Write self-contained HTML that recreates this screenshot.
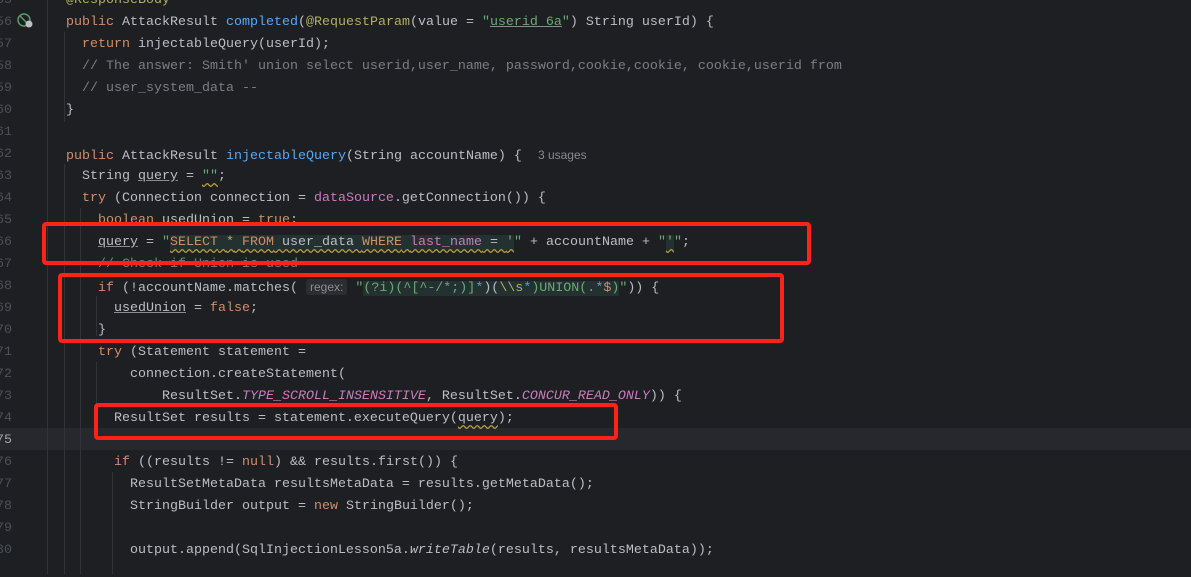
<!DOCTYPE html>
<html><head><meta charset="utf-8"><style>
body{margin:0;width:1191px;height:574px;background:#1e1f22;overflow:hidden;position:relative;font-family:"Liberation Mono",monospace;font-size:13.33px;color:#bcbec4}
#t{position:absolute;left:0;top:3px;width:1191px;height:574px}
.l{position:absolute;left:0;height:22px;line-height:22px;white-space:pre;width:1191px}
.n{position:absolute;left:-8px;width:20px;text-align:right;color:#4b5059}
.c{position:absolute;left:66px}
.k{color:#cf8e6d}.f{color:#56a8f5}.s{color:#6aab73}.cm{color:#7a7e85}.a{color:#b3ae60}.p{color:#c77dbb}.i{font-style:italic}
.u{text-decoration:underline;text-decoration-color:#8c8c8c}
.sq{background:#233130}
.w{text-decoration:underline wavy #b3a03a;text-underline-offset:3px}
.hint{background:#2b2d30;color:#8a8d94;border-radius:3px;font-family:"Liberation Sans",sans-serif;font-size:12px;padding:1px 4px}
.box{position:absolute;border:4px solid #ff2216;border-radius:4px}
.g{position:absolute;top:0;bottom:0;width:1px;background:#313338}
</style></head><body>
<div style="position:absolute;left:0;top:428px;width:1191px;height:22px;background:#26282e"></div>
<div class="g" style="left:47px"></div>
<div class="g" style="left:64px;top:32px;height:90px"></div>
<div class="g" style="left:64px;top:164px;height:410px"></div>
<div class="g" style="left:80px;top:208px;height:366px"></div>
<div class="g" style="left:96px;top:296px;height:40px"></div>
<div class="g" style="left:96px;top:362px;height:66px"></div>
<div class="g" style="left:112px;top:472px;height:102px"></div>
<svg style="position:absolute;left:16px;top:13px" width="18" height="16"><circle cx="8" cy="7" r="6" fill="none" stroke="#5a9a6a" stroke-width="1.5"/><path d="M4 3 L11 10" stroke="#5a9a6a" stroke-width="1.5"/><circle cx="13" cy="11" r="3.5" fill="#bcbec4"/></svg>
<div id="t">
<div class="l" style="top:-13px"><span class="n">55</span><span class="c a">@ResponseBody</span></div>
<div class="l" style="top:9px"><span class="n">56</span><span class="c"><span class="k">public</span> AttackResult <span class="f">completed</span>(<span class="a">@RequestParam</span>(value = <span class="s">"<span class="u">userid_6a</span>"</span>) String userId) {</span></div>
<div class="l" style="top:31px"><span class="n">57</span><span class="c">  <span class="k">return</span> injectableQuery(userId);</span></div>
<div class="l" style="top:53px"><span class="n">58</span><span class="c cm">  // The answer: Smith' union select userid,user_name, password,cookie,cookie, cookie,userid from</span></div>
<div class="l" style="top:75px"><span class="n">59</span><span class="c cm">  // user_system_data --</span></div>
<div class="l" style="top:97px"><span class="n">60</span><span class="c">}</span></div>
<div class="l" style="top:119px"><span class="n">61</span></div>
<div class="l" style="top:141px"><span class="n">62</span><span class="c"><span class="k">public</span> AttackResult <span class="f">injectableQuery</span>(String accountName) {  <span style="font-family:'Liberation Sans',sans-serif;font-size:12px;color:#868a91">3 usages</span></span></div>
<div class="l" style="top:163px"><span class="n">63</span><span class="c">  String <span class="u">query</span> = <span class="s w">""</span>;</span></div>
<div class="l" style="top:185px"><span class="n">64</span><span class="c">  <span class="k">try</span> (Connection connection = <span class="p">dataSource</span>.getConnection()) {</span></div>
<div class="l" style="top:207px"><span class="n">65</span><span class="c">    <span class="k">boolean</span> <span class="u">usedUnion</span> = <span class="k">true</span>;</span></div>
<div class="l" style="top:229px"><span class="n">66</span><span class="c">    <span class="u">query</span> = <span class="s">"</span><span class="sq w"><span class="k">SELECT</span> <span class="a">*</span> <span class="k">FROM</span> user_data <span class="k">WHERE</span> <span class="p">last_name</span> = <span class="s">'</span></span><span class="s">"</span> + accountName + <span class="s">"<span class="sq w">'</span>"</span>;</span></div>
<div class="l" style="top:251px"><span class="n">67</span><span class="c cm">    // Check if Union is used</span></div>
<div class="l" style="top:273px"><span class="n">68</span><span class="c">    <span class="k">if</span> (!accountName.matches( <span class="hint">regex:</span> <span class="s">"</span><span class="sq"><span class="s">(?i)(^[^-/*;)]</span><span style="color:#2fb8c0">*</span>)(<span class="a">\\s</span><span style="color:#2fb8c0">*</span><span class="s">)UNION(.</span><span style="color:#2fb8c0">*</span><span class="k">$</span><span class="s">)</span></span><span class="s">"</span>)) {</span></div>
<div class="l" style="top:295px"><span class="n">69</span><span class="c">      <span class="u">usedUnion</span> = <span class="k">false</span>;</span></div>
<div class="l" style="top:317px"><span class="n">70</span><span class="c">    }</span></div>
<div class="l" style="top:339px"><span class="n">71</span><span class="c">    <span class="k">try</span> (Statement statement =</span></div>
<div class="l" style="top:361px"><span class="n">72</span><span class="c">        connection.createStatement(</span></div>
<div class="l" style="top:383px"><span class="n">73</span><span class="c">            ResultSet.<span class="p i">TYPE_SCROLL_INSENSITIVE</span>, ResultSet.<span class="p i">CONCUR_READ_ONLY</span>)) {</span></div>
<div class="l" style="top:405px"><span class="n">74</span><span class="c">      ResultSet results = statement.executeQuery(<span class="w">query</span>);</span></div>
<div class="l" style="top:427px"><span class="n" style="color:#a1a3ab">75</span></div>
<div class="l" style="top:449px"><span class="n">76</span><span class="c">      <span class="k">if</span> ((results != <span class="k">null</span>) &amp;&amp; results.first()) {</span></div>
<div class="l" style="top:471px"><span class="n">77</span><span class="c">        ResultSetMetaData resultsMetaData = results.getMetaData();</span></div>
<div class="l" style="top:493px"><span class="n">78</span><span class="c">        StringBuilder output = <span class="k">new</span> StringBuilder();</span></div>
<div class="l" style="top:515px"><span class="n">79</span></div>
<div class="l" style="top:537px"><span class="n">80</span><span class="c">        output.append(SqlInjectionLesson5a.<span class="i">writeTable</span>(results, resultsMetaData));</span></div>
</div>
<div class="box" style="left:42px;top:222px;width:761px;height:35px"></div>
<div class="box" style="left:58px;top:273px;width:718px;height:62px"></div>
<div class="box" style="left:94px;top:403px;width:516px;height:29px"></div>
</body></html>
